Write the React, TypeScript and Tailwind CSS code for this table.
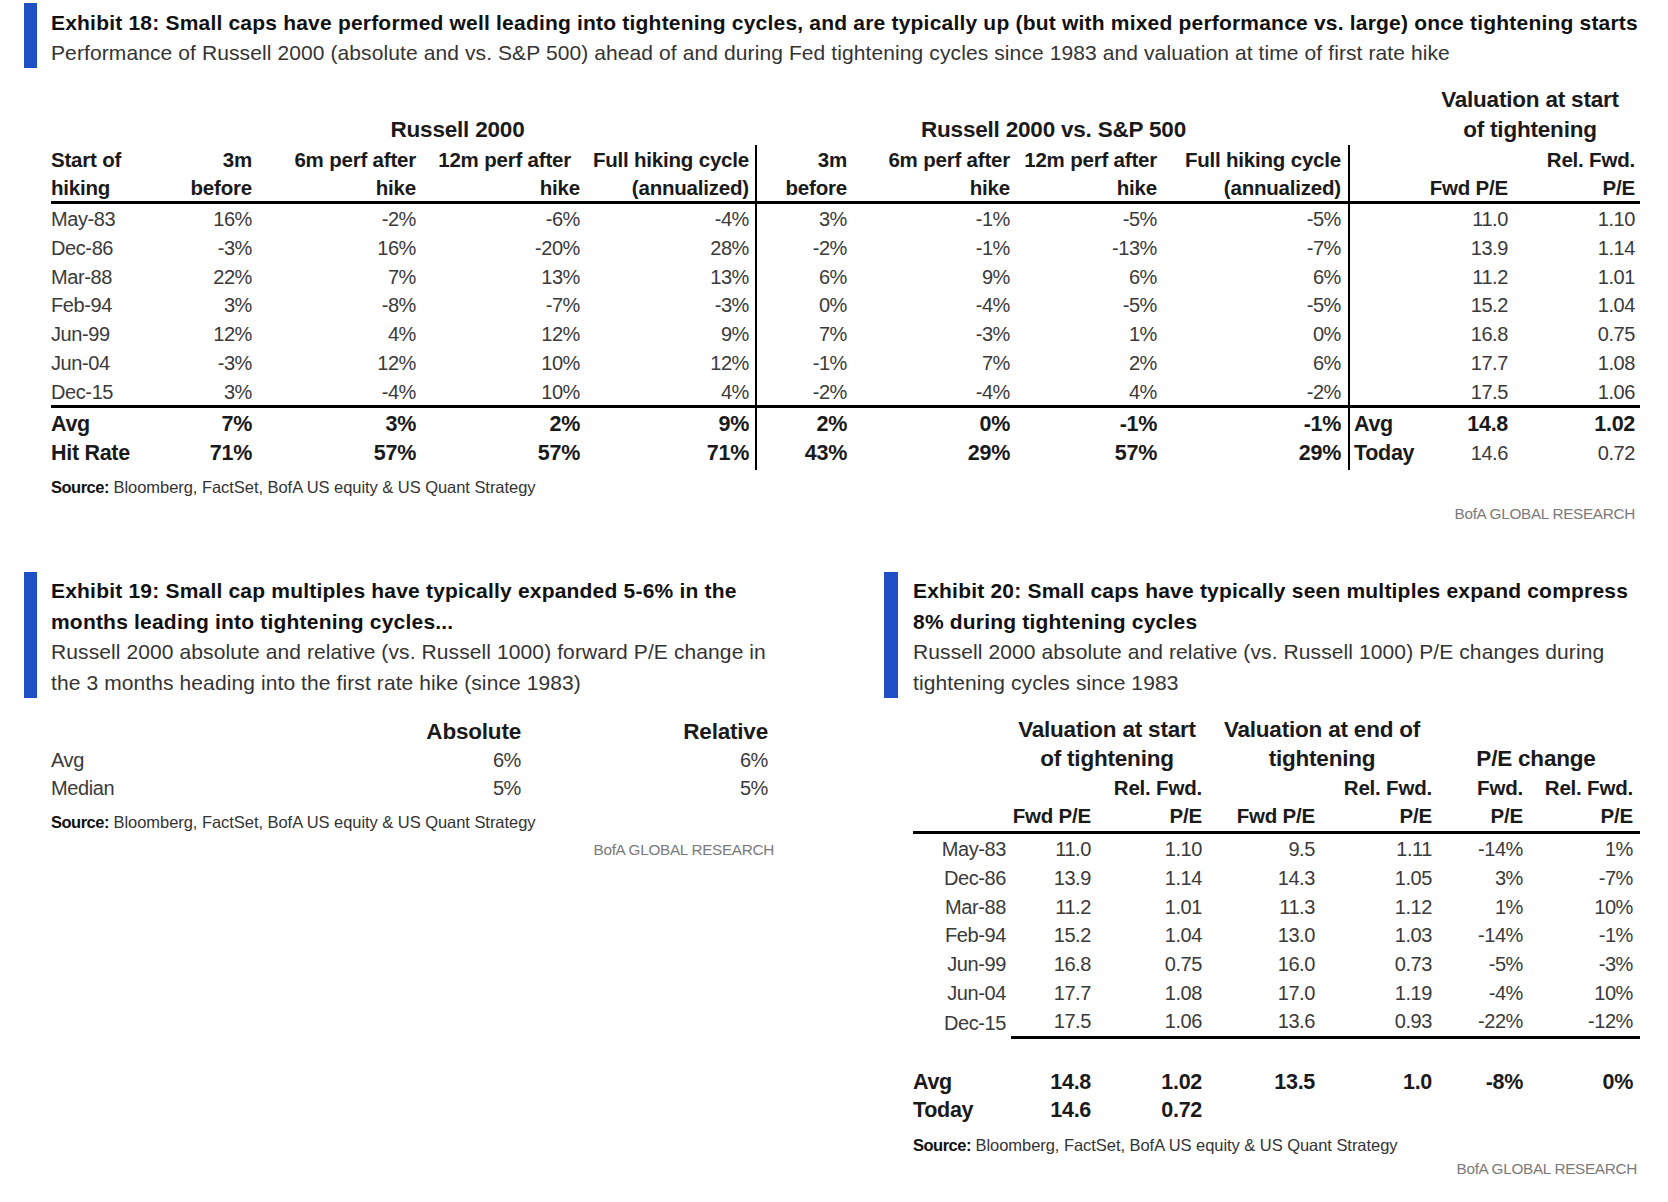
import React from "react";

const BLUE = "bg-[#1f4fc4]";

const ex18Rows: string[][] = [
  ["May-83", "16%", "-2%", "-6%", "-4%", "3%", "-1%", "-5%", "-5%", "", "11.0", "1.10"],
  ["Dec-86", "-3%", "16%", "-20%", "28%", "-2%", "-1%", "-13%", "-7%", "", "13.9", "1.14"],
  ["Mar-88", "22%", "7%", "13%", "13%", "6%", "9%", "6%", "6%", "", "11.2", "1.01"],
  ["Feb-94", "3%", "-8%", "-7%", "-3%", "0%", "-4%", "-5%", "-5%", "", "15.2", "1.04"],
  ["Jun-99", "12%", "4%", "12%", "9%", "7%", "-3%", "1%", "0%", "", "16.8", "0.75"],
  ["Jun-04", "-3%", "12%", "10%", "12%", "-1%", "7%", "2%", "6%", "", "17.7", "1.08"],
  ["Dec-15", "3%", "-4%", "10%", "4%", "-2%", "-4%", "4%", "-2%", "", "17.5", "1.06"],
];

const ex20Rows: string[][] = [
  ["May-83", "11.0", "1.10", "9.5", "1.11", "-14%", "1%"],
  ["Dec-86", "13.9", "1.14", "14.3", "1.05", "3%", "-7%"],
  ["Mar-88", "11.2", "1.01", "11.3", "1.12", "1%", "10%"],
  ["Feb-94", "15.2", "1.04", "13.0", "1.03", "-14%", "-1%"],
  ["Jun-99", "16.8", "0.75", "16.0", "0.73", "-5%", "-3%"],
  ["Jun-04", "17.7", "1.08", "17.0", "1.19", "-4%", "10%"],
  ["Dec-15", "17.5", "1.06", "13.6", "0.93", "-22%", "-12%"],
];

const G18 =
  "grid grid-cols-[119px_82px_164px_164px_177px_90px_163px_147px_193px_70px_88px_132px]";
const G20 = "grid grid-cols-[93px_85px_111px_113px_117px_91px_117px]";

const TITLE = "text-[21px] font-bold text-[#111] tracking-[0.2px]";
const SUB = "text-[21px] text-[#333] tracking-[0.1px]";
const GROUP = "text-[22.5px] font-bold text-[#1a1a1a] tracking-[-0.2px]";
const HEAD = "text-[20.5px] font-bold text-[#1a1a1a] tracking-[-0.2px]";
const DATA = "text-[20px] text-[#3a3a3a] tracking-[-0.4px]";
const BOLDROW = "text-[21.5px] font-bold text-[#1a1a1a] tracking-[-0.3px]";

function cell18(i: number, extra = "") {
  let c = "whitespace-nowrap h-full flex items-center ";
  if (i === 0) c += "justify-start ";
  else if (i === 9) c += "justify-start pl-[4px] ";
  else c += "justify-end ";
  if (i === 4) c += "pr-[6px] border-r-2 border-black ";
  if (i === 8) c += "pr-[7px] border-r-2 border-black ";
  if (i === 11) c += "pr-[5px] ";
  return c + extra;
}

function Source() {
  return (
    <div className="text-[16.5px] leading-[22px] text-[#333] whitespace-nowrap">
      <span className="font-bold text-[#111] tracking-[-0.5px]">Source:</span>{" "}
      <span className="tracking-[-0.05px]">Bloomberg, FactSet, BofA US equity &amp; US Quant Strategy</span>
    </div>
  );
}

function Brand() {
  return (
    <div className="text-right text-[15.3px] leading-[22px] text-[#7a7a7a] tracking-[-0.3px]">
      BofA GLOBAL RESEARCH
    </div>
  );
}

export default function App() {
  const h1 = ["Start of", "3m", "6m perf after", "12m perf after", "Full hiking cycle", "3m", "6m perf after", "12m perf after", "Full hiking cycle", "", "", "Rel. Fwd."];
  const h2 = ["hiking", "before", "hike", "hike", "(annualized)", "before", "hike", "hike", "(annualized)", "", "Fwd P/E", "P/E"];
  const avg = ["Avg", "7%", "3%", "2%", "9%", "2%", "0%", "-1%", "-1%", "Avg", "14.8", "1.02"];
  const hit = ["Hit Rate", "71%", "57%", "57%", "71%", "43%", "29%", "57%", "29%", "Today", "14.6", "0.72"];

  return (
    <div className="w-[1668px] h-[1202px] bg-white overflow-hidden font-['Liberation_Sans',Arial,sans-serif] text-[#333]">
      {/* Exhibit 18 */}
      <div className="pt-[3px] pl-[24px]">
        <div className="flex">
          <div className={`w-[13px] ${BLUE}`} />
          <div className="ml-[14px] pt-[5px] leading-[30px] whitespace-nowrap">
            <div className={TITLE}>
              Exhibit 18: Small caps have performed well leading into tightening cycles, and are typically up (but with mixed performance vs. large) once tightening starts
            </div>
            <div className={SUB}>
              Performance of Russell 2000 (absolute and vs. S&amp;P 500) ahead of and during Fed tightening cycles since 1983 and valuation at time of first rate hike
            </div>
          </div>
        </div>
      </div>

      <div className="pl-[51px] mt-[17px] w-[1640px]">
        {/* group header */}
        <div className={`${G18} items-end leading-[30px] ${GROUP}`}>
          <div />
          <div className="col-span-4 text-center pr-[12px]">Russell 2000</div>
          <div className="col-span-4 text-center">Russell 2000 vs. S&amp;P 500</div>
          <div />
          <div className="col-span-2 text-center">
            Valuation at start
            <br />
            of tightening
          </div>
        </div>
        {/* header rows */}
        <div className={`${G18} h-[28px] ${HEAD}`}>
          {h1.map((t, i) => (
            <div key={i} className={cell18(i, i === 3 ? "pr-[9px]" : "")}>
              {t}
            </div>
          ))}
        </div>
        <div className={`${G18} h-[31px] border-b-[3px] border-black ${HEAD}`}>
          {h2.map((t, i) => (
            <div key={i} className={cell18(i)}>
              {t}
            </div>
          ))}
        </div>
        {/* data */}
        {ex18Rows.map((r, ri) => (
          <div
            key={ri}
            className={`${G18} ${ri === ex18Rows.length - 1 ? "h-[31.5px] border-b-[3px] border-black" : "h-[28.8px]"} ${DATA}`}
          >
            {r.map((t, i) => (
              <div key={i} className={cell18(i)}>
                {t}
              </div>
            ))}
          </div>
        ))}
        <div className={`${G18} h-[29px] ${BOLDROW}`}>
          {avg.map((t, i) => (
            <div key={i} className={cell18(i)}>
              {t}
            </div>
          ))}
        </div>
        <div className={`${G18} h-[29px] ${BOLDROW}`}>
          {hit.map((t, i) => (
            <div
              key={i}
              className={cell18(i, i >= 10 ? "font-normal text-[#3a3a3a] text-[20px] tracking-[-0.4px]" : "")}
            >
              {t}
            </div>
          ))}
        </div>
        <div className="mt-[10px]">
          <Source />
        </div>
        <div className="mt-[5px] pr-[5px]">
          <Brand />
        </div>
      </div>

      {/* bottom row */}
      <div className="flex mt-[47px]">
        {/* Exhibit 19 */}
        <div className="w-[884px] pl-[24px]">
          <div className="flex">
            <div className={`w-[13px] ${BLUE}`} />
            <div className="ml-[14px] pt-[4px] leading-[30.5px] whitespace-nowrap">
              <div className={TITLE}>
                Exhibit 19: Small cap multiples have typically expanded 5-6% in the
                <br />
                months leading into tightening cycles...
              </div>
              <div className={SUB}>
                Russell 2000 absolute and relative (vs. Russell 1000) forward P/E change in
                <br />
                the 3 months heading into the first rate hike (since 1983)
              </div>
            </div>
          </div>
          <div className="ml-[27px] mt-[17px] w-[723px]">
            <div className={`grid grid-cols-[349px_121px_247px] h-[30px] items-center ${GROUP}`}>
              <div />
              <div className="text-right">Absolute</div>
              <div className="text-right">Relative</div>
            </div>
            {[
              ["Avg", "6%", "6%"],
              ["Median", "5%", "5%"],
            ].map((r, i) => (
              <div key={i} className={`grid grid-cols-[349px_121px_247px] h-[27.5px] items-center ${DATA}`}>
                <div>{r[0]}</div>
                <div className="text-right">{r[1]}</div>
                <div className="text-right">{r[2]}</div>
              </div>
            ))}
            <div className="mt-[11px]">
              <Source />
            </div>
            <div className="mt-[6px]">
              <Brand />
            </div>
          </div>
        </div>

        {/* Exhibit 20 */}
        <div className="w-[784px]">
          <div className="flex">
            <div className={`w-[14px] ${BLUE}`} />
            <div className="ml-[15px] pt-[4px] leading-[30.5px] whitespace-nowrap">
              <div className={TITLE}>
                Exhibit 20: Small caps have typically seen multiples expand compress
                <br />
                8% during tightening cycles
              </div>
              <div className={SUB}>
                Russell 2000 absolute and relative (vs. Russell 1000) P/E changes during
                <br />
                tightening cycles since 1983
              </div>
            </div>
          </div>
          <div className="ml-[29px] mt-[17px] w-[727px]">
            <div className={`${G20} leading-[29px] items-end ${GROUP}`}>
              <div />
              <div className="col-span-2 text-center pl-[6px] whitespace-nowrap">
                Valuation at start
                <br />
                of tightening
              </div>
              <div className="col-span-2 text-center pl-[10px] whitespace-nowrap">
                Valuation at end of
                <br />
                tightening
              </div>
              <div className="col-span-2 text-center">P/E change</div>
            </div>
            <div className={`${G20} h-[28px] items-center ${HEAD}`}>
              <div />
              <div />
              <div className="text-right">Rel. Fwd.</div>
              <div />
              <div className="text-right">Rel. Fwd.</div>
              <div className="text-right">Fwd.</div>
              <div className="text-right pr-[7px]">Rel. Fwd.</div>
            </div>
            <div className={`${G20} h-[33px] pb-[2px] items-center border-b-[3px] border-black ${HEAD}`}>
              <div />
              <div className="text-right">Fwd P/E</div>
              <div className="text-right">P/E</div>
              <div className="text-right">Fwd P/E</div>
              <div className="text-right">P/E</div>
              <div className="text-right">P/E</div>
              <div className="text-right pr-[7px]">P/E</div>
            </div>
            {ex20Rows.map((r, ri) => {
              const last = ri === ex20Rows.length - 1;
              return (
                <div key={ri} className={`${G20} ${last ? "h-[31.7px]" : "h-[28.7px]"} ${DATA}`}>
                  {r.map((t, i) => (
                    <div
                      key={i}
                      className={
                        "h-full flex items-center justify-end " +
                        (i === 6 ? "pr-[7px] " : "") +
                        (last && i > 0 ? "border-b-[3px] border-black " : "") +
                        (last && i === 1 ? "ml-[5px] " : "")
                      }
                    >
                      {t}
                    </div>
                  ))}
                </div>
              );
            })}
            <div className={`${G20} h-[28px] mt-[28px] items-center ${BOLDROW}`}>
              {["Avg", "14.8", "1.02", "13.5", "1.0", "-8%", "0%"].map((t, i) => (
                <div key={i} className={(i === 0 ? "text-left" : "text-right") + (i === 6 ? " pr-[7px]" : "")}>
                  {t}
                </div>
              ))}
            </div>
            <div className={`${G20} h-[27px] items-center ${BOLDROW}`}>
              <div>Today</div>
              <div className="text-right">14.6</div>
              <div className="text-right">0.72</div>
            </div>
            <div className="mt-[13px]">
              <Source />
            </div>
            <div className="mt-[2px] pr-[3px]">
              <Brand />
            </div>
          </div>
        </div>
      </div>
    </div>
  );
}
